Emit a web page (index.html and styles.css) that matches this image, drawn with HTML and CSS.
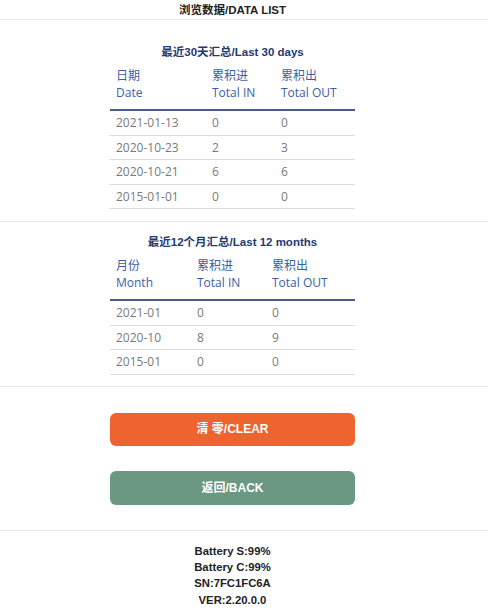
FILE: index.html
```html
<!DOCTYPE html>
<html lang="zh-CN">
<head>
    <meta charset="UTF-8">
    <meta name="viewport" content="width=device-width, initial-scale=1.0">
    <title>浏览数据/DATA LIST</title>
    <link rel="stylesheet" href="styles.css">
</head>
<body>
    <div class="top-bar">浏览数据/DATA LIST</div>

    <div class="block summary first">
        <div class="inner">
            <div class="summary-title">最近30天汇总/Last 30 days</div>
            <table class="data-table days">
                <thead>
                    <tr>
                        <th class="col-a">日期<br>Date</th>
                        <th class="col-b">累积进<br>Total IN</th>
                        <th class="col-c">累积出<br>Total OUT</th>
                    </tr>
                </thead>
                <tbody>
                    <tr><td>2021-01-13</td><td>0</td><td>0</td></tr>
                    <tr><td>2020-10-23</td><td>2</td><td>3</td></tr>
                    <tr><td>2020-10-21</td><td>6</td><td>6</td></tr>
                    <tr><td>2015-01-01</td><td>0</td><td>0</td></tr>
                </tbody>
            </table>
        </div>
    </div>

    <div class="block summary">
        <div class="inner">
            <div class="summary-title">最近12个月汇总/Last 12 months</div>
            <table class="data-table months">
                <thead>
                    <tr>
                        <th class="col-a">月份<br>Month</th>
                        <th class="col-b">累积进<br>Total IN</th>
                        <th class="col-c">累积出<br>Total OUT</th>
                    </tr>
                </thead>
                <tbody>
                    <tr><td>2021-01</td><td>0</td><td>0</td></tr>
                    <tr><td>2020-10</td><td>8</td><td>9</td></tr>
                    <tr><td>2015-01</td><td>0</td><td>0</td></tr>
                </tbody>
            </table>
        </div>
    </div>

    <div class="block actions">
        <div class="inner">
            <a href="#" class="btn btn-clear">清 零/CLEAR</a>
            <a href="#" class="btn btn-back">返回/BACK</a>
        </div>
    </div>

    <div class="footer">
        <div>Battery S:99%</div>
        <div>Battery C:99%</div>
        <div>SN:7FC1FC6A</div>
        <div>VER:2.20.0.0</div>
    </div>
</body>
</html>
```

FILE: styles.css
```css
body {
    font-family: "Liberation Sans", Arial, "Noto Sans CJK SC", sans-serif;
    margin: 0;
    padding: 0;
    background-color: #fff;
    color: #222;
}
.top-bar {
    height: 19px;
    line-height: 20px;
    padding-right: 23px;
    text-align: center;
    font-size: 11.5px;
    font-weight: bold;
    color: #222;
    border-bottom: 1px solid #e8e8e8;
}
.block {
    padding-right: 23px;
    border-bottom: 1px solid #e8e8e8;
}
.inner {
    width: 245px;
    margin: 0 auto;
}
.summary {
    padding-top: 12px;
    padding-bottom: 11px;
}
.summary.first {
    padding-top: 24px;
    padding-bottom: 12px;
}
.summary-title {
    text-align: center;
    font-size: 11.5px;
    line-height: 16px;
    font-weight: bold;
    color: #1f3a70;
}
.data-table {
    width: 100%;
    border-collapse: collapse;
    table-layout: fixed;
    font-family: "Open Sans", "Noto Sans CJK SC", sans-serif;
    font-size: 12px;
}
.days .col-a { width: 84px; }
.days .col-b { width: 57px; }
.months .col-a { width: 69px; }
.months .col-b { width: 63px; }
.data-table th {
    text-align: left;
    font-weight: normal;
    white-space: nowrap;
    color: #3a5fa6;
    line-height: 17px;
    padding: 7px 6px 8px;
    border-bottom: 2px solid #4a5a8c;
    vertical-align: bottom;
}
.data-table td {
    color: #7a7a7a;
    line-height: 14px;
    padding: 5px 6px 4.5px;
    border-bottom: 1px solid #dddddd;
}
.actions {
    padding-top: 26px;
    padding-bottom: 25px;
}
.btn {
    display: block;
    height: 33px;
    line-height: 33px;
    border-radius: 6px;
    text-align: center;
    text-decoration: none;
    color: #fff;
    font-size: 12px;
    font-weight: bold;
}
.btn-clear {
    background-color: #ee642f;
    margin-bottom: 25px;
}
.btn-back {
    height: 34px;
    line-height: 34px;
    background-color: #6a9882;
}
.footer {
    padding: 12px 23px 0 0;
    text-align: center;
    font-size: 11.3px;
    line-height: 16.4px;
    font-weight: bold;
    color: #222;
}
```
